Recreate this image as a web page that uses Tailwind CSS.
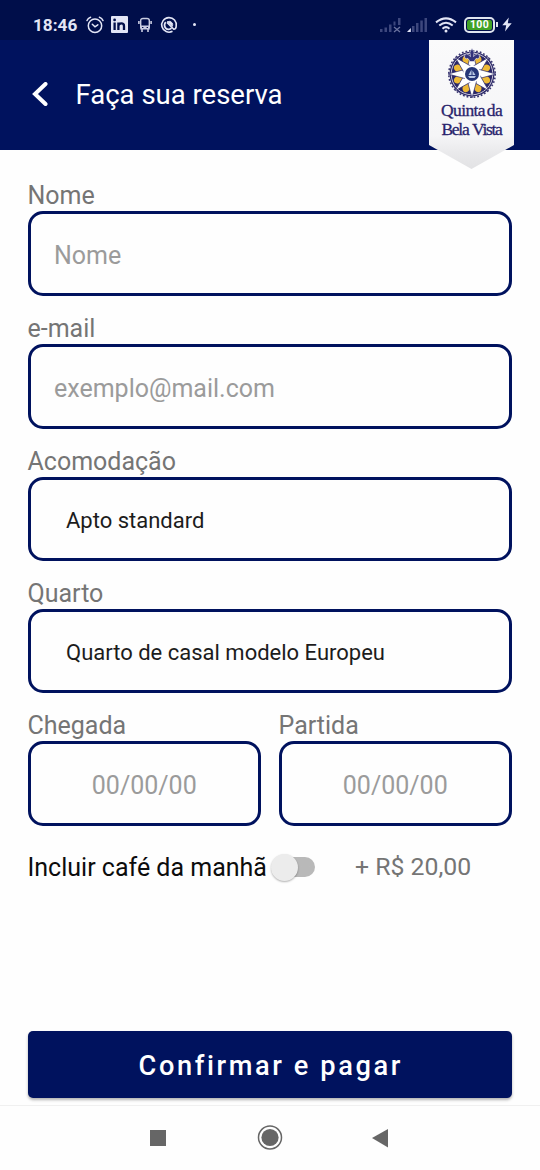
<!DOCTYPE html>
<html lang="pt-BR">
<head>
<meta charset="utf-8">
<meta name="viewport" content="width=device-width, initial-scale=1">
<title>Faça sua reserva</title>
<script src="https://cdn.jsdelivr.net/npm/@tailwindcss/browser@4"></script>
</head>
<body class="bg-white">
<div class="relative flex h-[1170px] w-[540px] flex-col overflow-hidden bg-[#fefefe] font-['Roboto',sans-serif]">

  <!-- Status bar -->
  <div class="flex h-10 shrink-0 items-center bg-[#000e4a] pt-[9px] text-[#e3e6f6]">
    <span class="ml-[33px] w-[53px] text-[17.2px] leading-5 font-bold whitespace-nowrap">18:46</span>
    <svg class="h-[18px] w-[18px] shrink-0" viewBox="0 0 18 18" fill="none" stroke="currentColor" stroke-width="1.5" stroke-linecap="round"><circle cx="9" cy="9.7" r="6.7"/><path d="M1 4.6Q2 2 4.6 1.2M17 4.6Q16 2 13.4 1.2M6.3 8.3L9 10.8L11.8 8.8"/></svg>
    <svg class="ml-[7px] h-[17px] w-[17px] shrink-0" viewBox="0 0 17 17"><rect width="17" height="17" rx="1" fill="#e3e6f6"/><g stroke="#000e4a" stroke-width="2.3" fill="none"><path d="M3.6 6.5V14M7.4 6.5V14M7.4 10Q7.6 7.4 10.3 7.4Q13 7.4 13 10V14"/></g><circle cx="3.6" cy="3.9" r="1.4" fill="#000e4a"/></svg>
    <svg class="ml-[10px] h-[16px] w-[14px] shrink-0" viewBox="0 0 14 16" fill="none" stroke="#c9cde2"><path d="M2.700 11V3.500Q2.700 1.500 5 1.500H9Q11.300 1.500 11.300 3.500V11" stroke-width="1.400"/><path d="M2.200 8.500H11.800V12.500H2.200Z" fill="#c9cde2" stroke="none"/><path d="M.9 4V7M13.100 4V7M4 12V15M10 12V15" stroke-width="1.600"/><path d="M4 10.500H5.400M8.600 10.500H10" stroke="#000e4a"/></svg>
    <svg class="ml-[8px] h-[18px] w-[18px] shrink-0" viewBox="0 0 18 18" fill="none" stroke="currentColor"><path d="M12.500 15.300A7.300 7.300 0 1 1 16.200 10.200Q16 13.200 13.800 13.200L7 6.500" stroke-width="1.600"/><path d="M5.800 6.200A4 4 0 0 0 11.500 12.200" stroke-width="1.800"/><path d="M7 5.800Q10.500 4 12.300 7Q13 8.500 12.500 10.300L7 5.800Z" fill="currentColor" stroke-width=".8"/></svg>
    <span class="ml-[15px] h-[3px] w-[3px] shrink-0 rounded-sm bg-[#e3e6f6]"></span>
    <svg class="ml-[184px] h-[16px] w-[22px] shrink-0" viewBox="0 0 22 16" fill="#3d477d"><path d="M0 12h2.500v3H0zM4.500 10.500h2.500v4.500H4.500zM9 7.500h2.500v7.500H9zM13.500 4.500h2v4h-2zM18 1h2.500v7H18z"/><path d="M14 10L20 15M20 10L14 15" stroke="#6a739f" stroke-width="1.3"/></svg>
    <svg class="ml-[5px] h-[16px] w-[21px] shrink-0" viewBox="0 0 21 16" fill="#3d477d"><path d="M0 15L3.800 11V15z" fill="#e3e6f6"/><path d="M5 9h2.500v6H5zM9 6h2.500v9H9zM13.300 3.500h2.500v11.500h-2.500zM17.500 1H20v14h-2.500z"/></svg>
    <svg class="ml-[7px] h-[16px] w-[22px] shrink-0" viewBox="0 0 22 16" fill="none" stroke="currentColor" stroke-width="2"><path d="M1 5.400Q11-2.600 21 5.400M4.300 8.600Q11 3 17.700 8.600M7.500 11.700Q11 8.600 14.500 11.700"/><circle cx="11" cy="14" r="1.500" fill="currentColor" stroke="none"/></svg>
    <div class="ml-[7px] flex h-[16px] w-[31px] shrink-0 items-center justify-center rounded-[5px] border-2 border-[#dfe5ef] p-px">
      <span class="flex h-[10px] w-full items-center justify-center rounded-[2px] bg-[#41a326] text-[10.500px] leading-[10px] font-bold tracking-[.3px] text-white">100</span>
    </div>
    <span class="ml-px h-[5px] w-[2px] shrink-0 bg-[#dfe5ef]"></span>
    <svg class="ml-[4px] h-[15px] w-[10px] shrink-0" viewBox="0 0 10 15"><path d="M6.800.500L.300 8.200H4.200L3 14.500L9.700 6.200H5.800Z" fill="currentColor"/></svg>
  </div>

  <!-- App bar -->
  <header class="flex h-[110px] shrink-0 items-center bg-[#00125e]">
    <svg class="ml-[32px] h-[26px] w-[17px]" viewBox="0 0 17 26" fill="none" stroke="#fff" stroke-width="4" stroke-linecap="round"><path d="M13.500 2L3 12L13.500 22"/></svg>
    <h1 class="ml-[26.5px] text-[27.5px] leading-8 whitespace-nowrap text-white">Faça sua reserva</h1>
  </header>

  <!-- Hotel pennant, hanging over the app bar -->
  <div class="absolute top-10 left-[429px] flex h-[130px] w-[85px] flex-col items-center">
    <svg class="absolute inset-0 h-full w-full overflow-visible" viewBox="0 0 85 130">
      <defs><linearGradient id="cloth" x1="0" y1="0" x2="0" y2="1"><stop offset="0" stop-color="#fafafb"/><stop offset=".74" stop-color="#f5f5f7"/><stop offset=".88" stop-color="#e9e9eb"/><stop offset="1" stop-color="#e2e2e4"/></linearGradient></defs>
      <path d="M0 0H85V105L42.500 129L0 105Z" fill="url(#cloth)"/>
    </svg>
    <svg class="relative mt-[8px] h-[52px] w-[50px]" viewBox="-25 -26 50 52">
      <circle r="22.500" fill="#2b2868"/>
      <circle r="23.200" fill="none" stroke="#3b3872" stroke-width="1.600" stroke-dasharray="1.800 1.840"/>
      <circle r="20.800" fill="none" stroke="#c9c5d6" stroke-width="1"/>
      <g fill="#edb935">
        <g id="lobes">
          <ellipse cy="-14.800" rx="3.700" ry="4.600" transform="rotate(22.500)"/>
          <ellipse cy="-14.800" rx="3.700" ry="4.600" transform="rotate(67.500)"/>
          <ellipse cy="-14.800" rx="3.700" ry="4.600" transform="rotate(112.500)"/>
          <ellipse cy="-14.800" rx="3.700" ry="4.600" transform="rotate(157.500)"/>
        </g>
        <use href="#lobes" transform="rotate(180)"/>
      </g>
      <g stroke="#2b2868" stroke-width=".7" fill="#fff">
        <g id="rays">
          <path d="M0-24L4.600-7H-4.600Z"/>
          <path d="M0-23.500L4.600-7H-4.600Z" transform="rotate(45)"/>
          <path d="M0-24L4.600-7H-4.600Z" transform="rotate(90)"/>
          <path d="M0-23.500L4.600-7H-4.600Z" transform="rotate(135)"/>
        </g>
        <use href="#rays" transform="rotate(180)"/>
      </g>
      <circle r="8.800" fill="#fff"/>
      <path d="M0-25.500Q3.500-22 1.500-17.500Q6.500-22.500 7.500-18Q7.500-14.500 4-15.500L2-12.500H-2L-4-15.500Q-7.500-14.500-7.500-18Q-6.500-22.500-1.500-17.500Q-3.500-22 0-25.500Z" fill="#33337b" stroke="#f4f4f6" stroke-width=".6"/>
      <circle r="7" fill="#263779"/>
      <path d="M-.500-4.500L-3.500 1H-.500ZM.500-3.500L3.500 1H.500ZM-4 2H4L2.500 4H-2.500Z" fill="#b9c9e4"/>
    </svg>
    <div class="relative mt-px flex flex-col items-center font-['Liberation_Serif',serif] text-[17.5px] leading-[19px] whitespace-nowrap text-[#29246c] [-webkit-text-stroke:.3px_#29246c]">
      <span class="tracking-[-.6px] [word-spacing:-2px]">Quinta da</span>
      <span class="tracking-[-1.3px] [word-spacing:1px]">Bela Vista</span>
    </div>
  </div>

  <!-- Booking form -->
  <main class="flex flex-1 flex-col pt-[30px] pr-[28px] pl-[27.5px]">
    <label class="flex flex-col">
      <span class="h-[31px] text-[25px] leading-[31px] text-[#757575]">Nome</span>
      <span class="flex h-[85px] items-center rounded-[15px] border-3 border-[#00125e] pt-[4px] pl-[23.5px] text-[25px] text-[#9b9b9b]">Nome</span>
    </label>
    <label class="mt-[17px] flex flex-col">
      <span class="h-[31px] text-[25px] leading-[31px] text-[#757575]">e-mail</span>
      <span class="flex h-[85px] items-center rounded-[15px] border-3 border-[#00125e] pt-[4px] pl-[23.5px] text-[25px] text-[#9b9b9b]">exemplo@mail.com</span>
    </label>
    <label class="mt-[17px] flex flex-col">
      <span class="h-[31px] text-[25px] leading-[31px] text-[#757575]">Acomodação</span>
      <span class="flex h-[84px] items-center rounded-[15px] border-3 border-[#00125e] pt-[3px] pl-[35.5px] text-[22px] text-[#1c1c1c]">Apto standard</span>
    </label>
    <label class="mt-[17px] flex flex-col">
      <span class="h-[31px] text-[25px] leading-[31px] text-[#757575]">Quarto</span>
      <span class="flex h-[84px] items-center rounded-[15px] border-3 border-[#00125e] pt-[3px] pl-[35.5px] text-[22px] text-[#1c1c1c]">Quarto de casal modelo Europeu</span>
    </label>
    <div class="mt-[17px] grid grid-cols-2 gap-[17.5px]">
      <label class="flex flex-col">
        <span class="h-[31px] text-[25px] leading-[31px] text-[#757575]">Chegada</span>
        <span class="flex h-[85px] items-center justify-center rounded-[15px] border-3 border-[#00125e] pt-[4px] text-[25px] text-[#9b9b9b]">00/00/00</span>
      </label>
      <label class="flex flex-col">
        <span class="h-[31px] text-[25px] leading-[31px] text-[#757575]">Partida</span>
        <span class="flex h-[85px] items-center justify-center rounded-[15px] border-3 border-[#00125e] pt-[4px] text-[25px] text-[#9b9b9b]">00/00/00</span>
      </label>
    </div>
    <div class="mt-[24px] flex h-[34px] items-center">
      <span class="w-[243.5px] pt-[2px] text-[25px] leading-[34px] whitespace-nowrap text-[#0c0c0c]">Incluir café da manhã</span>
      <span class="flex h-[20px] w-[44px] items-center rounded-full bg-gradient-to-r from-transparent from-20% to-[#b9b9b9] to-20%">
        <span class="h-[27px] w-[27px] shrink-0 rounded-full bg-[#ececec] shadow-[0_1px_2px_rgba(0,0,0,.3)]"></span>
      </span>
      <span class="ml-[40px] text-[24.8px] leading-[34px] whitespace-nowrap text-[#757575]">+ R$ 20,00</span>
    </div>
    <button class="mt-auto mb-[7.5px] h-[66.5px] rounded-[5px] bg-[#00125e] pt-[5px] pl-[2px] text-[27.2px] font-medium tracking-[2.6px] text-white shadow-[0_2px_3px_rgba(0,0,0,.3)]">Confirmar e pagar</button>
  </main>

  <!-- System navigation -->
  <nav class="flex h-[65px] shrink-0 items-center border-t border-[#f0f0f0] text-[#666]">
    <span class="ml-[150px] h-[16px] w-[16px] bg-[#666]"></span>
    <svg class="ml-[91px] h-[26px] w-[26px]" viewBox="0 0 26 26"><circle cx="13" cy="12.500" r="11.500" fill="none" stroke="currentColor" stroke-width="1.500"/><circle cx="13" cy="12.500" r="8.600" fill="currentColor"/></svg>
    <svg class="ml-[89px] h-[19px] w-[16px]" viewBox="0 0 16 19"><path d="M16 0V18.500L0 9Z" fill="currentColor"/></svg>
  </nav>
</div>
</body>
</html>
